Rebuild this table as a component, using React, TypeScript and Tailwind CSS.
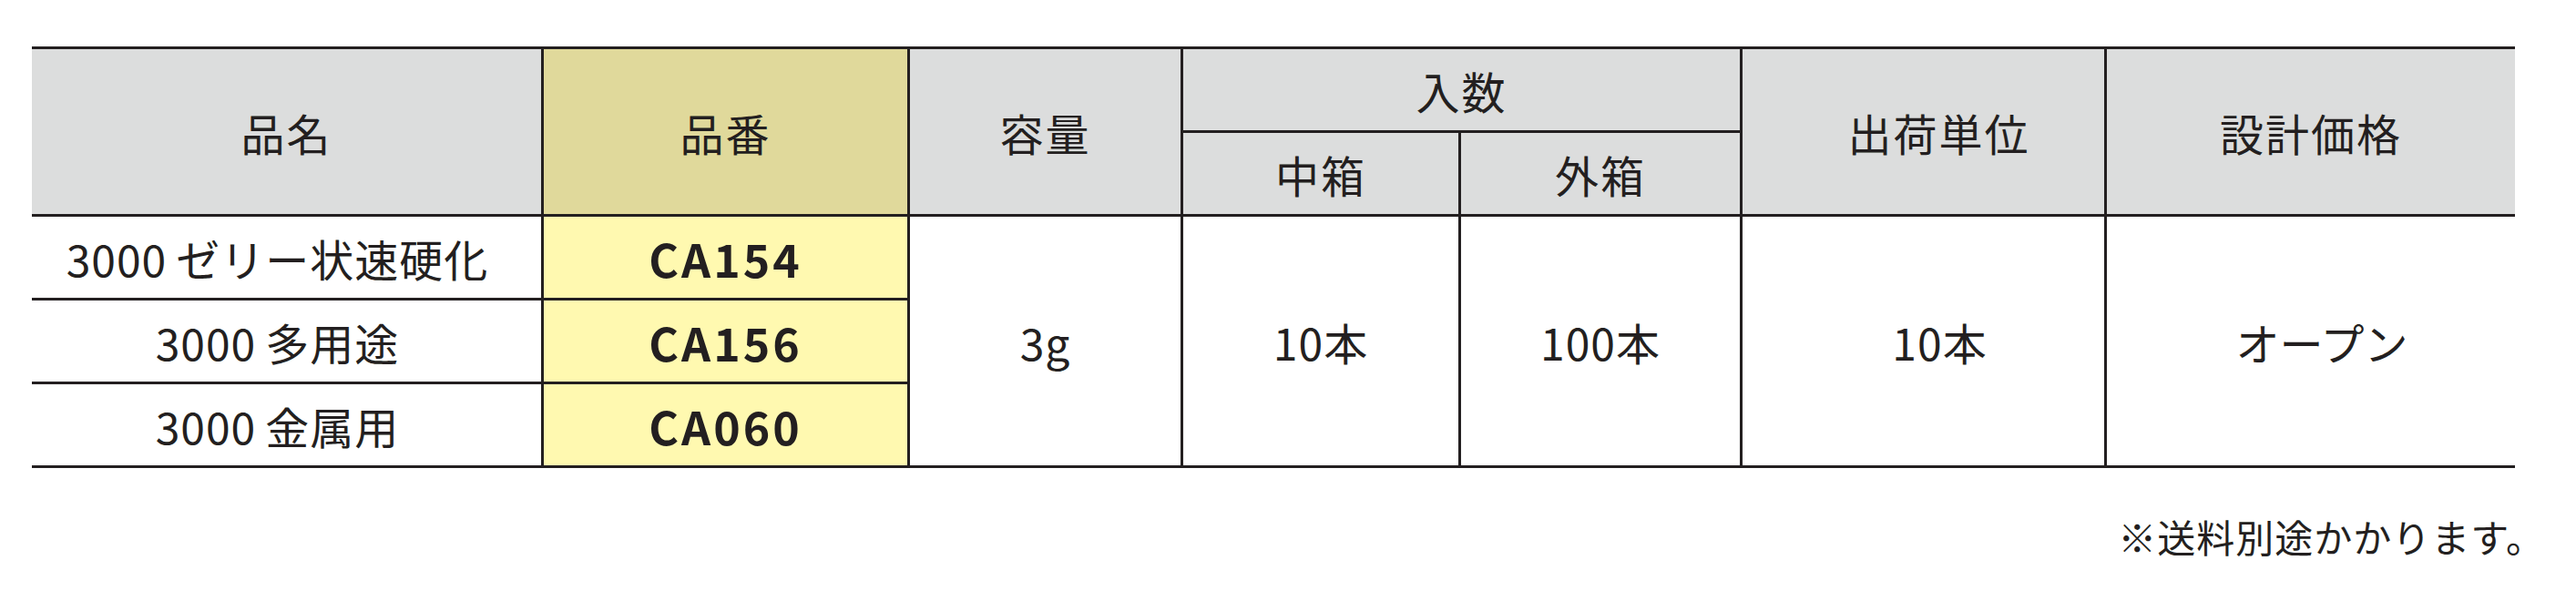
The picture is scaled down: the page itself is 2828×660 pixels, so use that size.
const rows = [
  { num: "3000", name: "ゼリー状速硬化", code: "CA154" },
  { num: "3000", name: "多用途", code: "CA156" },
  { num: "3000", name: "金属用", code: "CA060" },
];

const head = "flex items-center justify-center bg-[#dcdddd] tracking-[2px]";
const cell = "flex items-center justify-center bg-white tracking-[1px]";

export default function App() {
  return (
    <div
      className="w-[2828px] h-[660px] bg-white text-[#231f20] pt-[51px]"
      style={{ fontFamily: '"Noto Sans CJK JP", "Noto Sans", sans-serif' }}
    >
      <div className="ml-[35px] w-[2726px] bg-[#231f20] py-[3px] grid grid-cols-[559px_399px_297px_302px_306px_397px_448px] grid-rows-[89px_89px_89px_89px_89px] gap-[3px] text-[48px] leading-none">
        <div className={`${head} row-span-2`}>品名</div>
        <div className="row-span-2 flex items-center justify-center bg-[#e0d99b] tracking-[2px]">品番</div>
        <div className={`${head} row-span-2`}>容量</div>
        <div className={`${head} col-span-2`}>入数</div>
        <div className={`${head} row-span-2 pl-[34px]`}>出荷単位</div>
        <div className={`${head} row-span-2`}>設計価格</div>
        <div className={head}>中箱</div>
        <div className={head}>外箱</div>

        {rows.map((r, i) => (
          <div key={r.code} className="contents">
            <div className={`${cell} col-start-1 pr-[20px]`} style={{ gridRowStart: i + 3 }}>
              <span className="mr-[10px]">{r.num}</span>
              <span>{r.name}</span>
            </div>
            <div
              className="col-start-2 flex items-center justify-center bg-[#fff9b0] font-bold text-[50px] tracking-[3px]"
              style={{ gridRowStart: i + 3 }}
            >
              {r.code}
            </div>
          </div>
        ))}

        <div className={`${cell} col-start-3 row-start-3 row-span-3`}>3g</div>
        <div className={`${cell} col-start-4 row-start-3 row-span-3`}>10本</div>
        <div className={`${cell} col-start-5 row-start-3 row-span-3`}>100本</div>
        <div className={`${cell} col-start-6 row-start-3 row-span-3 pl-[36px]`}>10本</div>
        <div className="col-start-7 row-start-3 row-span-3 flex items-center justify-center bg-white pl-[24px]">
          オープン
        </div>
      </div>

      <p className="mt-[51px] pr-[34px] text-right text-[42px] leading-[48px] tracking-[1px]">
        ※送料別途かかります。
      </p>
    </div>
  );
}
